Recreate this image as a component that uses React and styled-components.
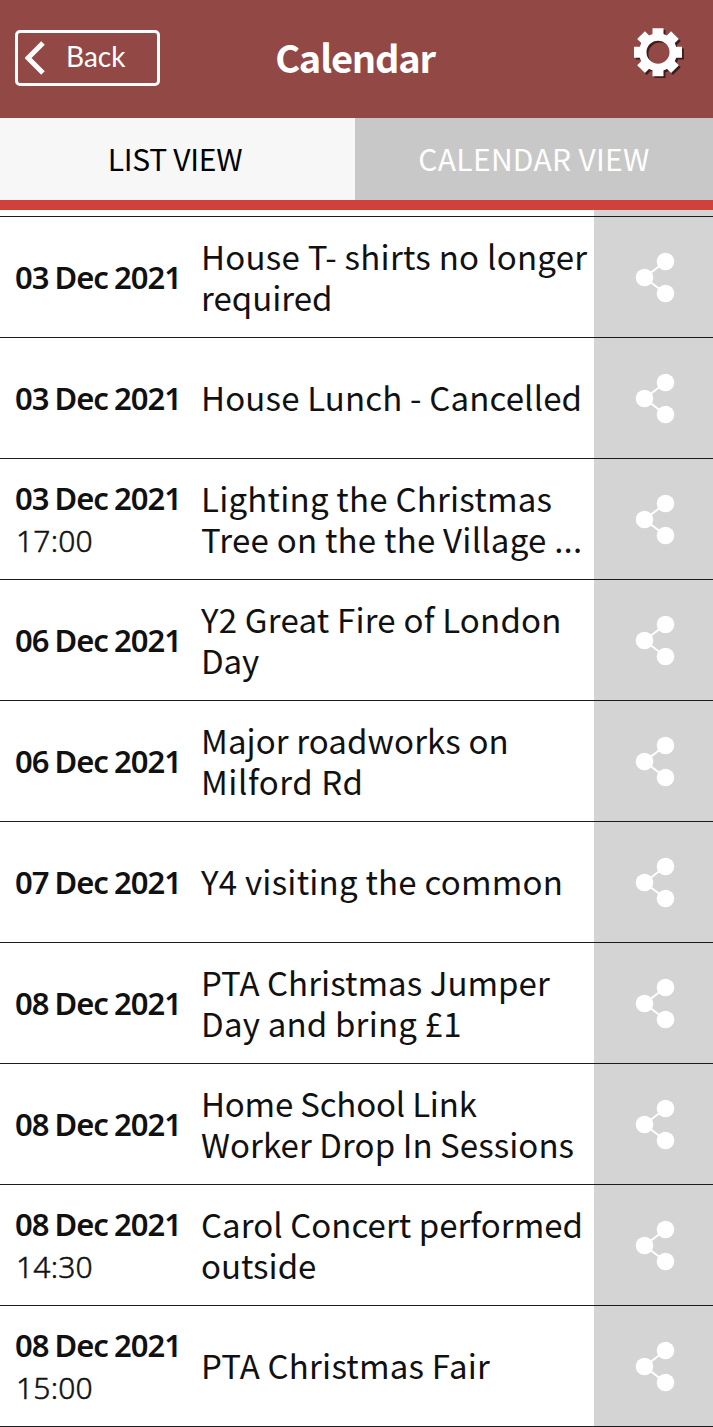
import React, { useState } from 'react';
import styled, { createGlobalStyle } from 'styled-components';

const GlobalStyle = createGlobalStyle`
  * {
    box-sizing: border-box;
  }

  body {
    margin: 0;
    background: #fff;
    font-family: 'Noto Sans', 'Open Sans', sans-serif;
    color: #111;
  }
`;

const Page = styled.div`
  width: 713px;
  height: 1427px;
  overflow: hidden;
`;

const Header = styled.header`
  display: grid;
  grid-template-columns: 200px 310px 203px;
  height: 118px;
  background: #924946;
  color: #fff;
`;

const BackButton = styled.button`
  display: flex;
  align-items: center;
  width: 145px;
  height: 56px;
  margin: 30px 0 0 15px;
  padding: 0 0 0 7px;
  border: 3px solid #fff;
  border-radius: 5px;
  background: transparent;
  color: #fff;
  font-family: Lato, sans-serif;
  font-size: 28px;
  line-height: 50px;
`;

const BackLabel = styled.span`
  margin: -4px 0 0 21px;
`;

const Title = styled.h1`
  margin: 0;
  text-align: center;
  font-family: 'Noto Sans CJK JP', 'Noto Sans', sans-serif;
  font-size: 38px;
  font-weight: 700;
  line-height: 114px;
  letter-spacing: -1.2px;
`;

const SettingsButton = styled.button`
  justify-self: end;
  align-self: start;
  width: 54px;
  height: 54px;
  margin: 26px 26px 0 0;
  padding: 0;
  border: 0;
  background: transparent;
`;

const Tabs = styled.nav`
  display: grid;
  grid-template-columns: 355px 358px;
  height: 92px;
  border-bottom: 10px solid #d0413c;
`;

const Tab = styled.button`
  padding: 0 ${({ $inset }) => $inset}px 2px 0;
  border: 0;
  background: ${({ $active }) => ($active ? '#f7f7f7' : '#c8c8c8')};
  color: ${({ $active }) => ($active ? '#000' : '#fff')};
  font-family: 'Noto Sans CJK JP', 'Noto Sans', sans-serif;
  font-size: 30px;
  line-height: 80px;
  letter-spacing: ${({ $tracking }) => $tracking}px;
`;

const List = styled.ul`
  margin: 0;
  padding: 0;
  list-style: none;
`;

const Row = styled.li`
  display: grid;
  grid-template-columns: 201px 393px 119px;
  height: ${({ $stub }) => ($stub ? 7 : 121)}px;
  border-bottom: 1px solid #1c1c1e;
`;

const When = styled.div`
  display: flex;
  flex-direction: column;
  justify-content: center;
  padding-left: 15px;
  font-size: 31px;
  line-height: 42px;
  white-space: nowrap;
`;

const DateText = styled.strong`
  font-weight: 600;
  letter-spacing: -1px;
  word-spacing: -1px;
`;

const Time = styled.span`
  margin: 1px 0 -1px 1px;
  font-size: 30px;
  font-weight: 300;
  letter-spacing: 0.2px;
  -webkit-text-stroke: 0.5px #111;
`;

const Name = styled.div`
  display: flex;
  flex-direction: column;
  justify-content: center;
  padding-bottom: 1px;
  font-family: 'Noto Sans CJK JP', 'Noto Sans', sans-serif;
  font-size: 33px;
  line-height: 41px;
  white-space: nowrap;
`;

const NameLine = styled.span`
  letter-spacing: ${({ $tracking }) => $tracking}px;
`;

const ShareButton = styled.button`
  display: flex;
  align-items: center;
  justify-content: center;
  padding: 0 0 0 3px;
  border: 0;
  background: #d4d4d4;
`;

const ShareIcon = () => (
  <svg width="40" height="52" viewBox="0 0 40 52" fill="#fff">
    <path d="M30.5 10.5l-21 16 21 16" fill="none" stroke="#fff" strokeWidth="2" />
    <circle cx="30.5" cy="10.5" r="8.8" />
    <circle cx="9.5" cy="26.5" r="8.8" />
    <circle cx="30.5" cy="42.5" r="8.8" />
  </svg>
);

const ChevronIcon = () => (
  <svg width="20" height="34" viewBox="0 0 20 34">
    <path d="M18 2 3 17l15 15" fill="none" stroke="#fff" strokeWidth="5" />
  </svg>
);

const Gear = ({ fill }) => (
  <g fill={fill}>
    <path
      fillRule="evenodd"
      d="M24.5 5.5a19 19 0 1 0 0 38 19 19 0 0 0 0-38Zm0 7.5a11.5 11.5 0 1 1 0 23 11.5 11.5 0 0 1 0-23Z"
    />
    {[0, 45, 90, 135, 180, 225, 270, 315].map((angle) => (
      <path key={angle} d="M19 .5h11v6l2 3H17l2-3Z" transform={`rotate(${angle} 24.5 24.5)`} />
    ))}
  </g>
);

const GearIcon = () => (
  <svg width="54" height="54" viewBox="0 0 54 54">
    <g transform="translate(2.4 3.6)" opacity="0.8">
      <Gear fill="#2b1010" />
    </g>
    <g transform="translate(.5 1.7)">
      <Gear fill="#fff" />
    </g>
  </svg>
);

// Each line is [text, letter spacing in px]
const events = [
  { date: '03 Dec 2021', lines: [['House T- shirts no longer', 0.27], ['required', 0]] },
  { date: '03 Dec 2021', lines: [['House Lunch - Cancelled', 0.16]] },
  { date: '03 Dec 2021', time: '17:00', lines: [['Lighting the Christmas', 0.23], ['Tree on the the Village ...', 0.24]] },
  { date: '06 Dec 2021', lines: [['Y2 Great Fire of London', 0.21], ['Day', -0.2]] },
  { date: '06 Dec 2021', lines: [['Major roadworks on', 0.1], ['Milford Rd', 0.55]] },
  { date: '07 Dec 2021', lines: [['Y4 visiting the common', 0.23]] },
  { date: '08 Dec 2021', lines: [['PTA Christmas Jumper', 0.06], ['Day and bring £1', 0.2]] },
  { date: '08 Dec 2021', lines: [['Home School Link', -0.2], ['Worker Drop In Sessions', 0.07]] },
  { date: '08 Dec 2021', time: '14:30', lines: [['Carol Concert performed', 0.05], ['outside', 0]] },
  { date: '08 Dec 2021', time: '15:00', lines: [['PTA Christmas Fair', 0.21]] },
];

const App = () => {
  const [view, setView] = useState('list');

  return (
    <Page>
      <GlobalStyle />
      <Header>
        <BackButton>
          <ChevronIcon />
          <BackLabel>Back</BackLabel>
        </BackButton>
        <Title>Calendar</Title>
        <SettingsButton aria-label="Settings">
          <GearIcon />
        </SettingsButton>
      </Header>

      <Tabs>
        <Tab $active={view === 'list'} $inset={5} $tracking={-0.3} onClick={() => setView('list')}>
          LIST VIEW
        </Tab>
        <Tab $active={view === 'calendar'} $inset={0} $tracking={0.3} onClick={() => setView('calendar')}>
          CALENDAR VIEW
        </Tab>
      </Tabs>

      <List>
        <Row $stub>
          <When />
          <Name />
          <ShareButton />
        </Row>
        {events.map((event, index) => (
          <Row key={index}>
            <When>
              <DateText>{event.date}</DateText>
              {event.time && <Time>{event.time}</Time>}
            </When>
            <Name>
              {event.lines.map(([text, tracking]) => (
                <NameLine key={text} $tracking={tracking}>
                  {text}
                </NameLine>
              ))}
            </Name>
            <ShareButton aria-label="Share">
              <ShareIcon />
            </ShareButton>
          </Row>
        ))}
      </List>
    </Page>
  );
};

export default App;
